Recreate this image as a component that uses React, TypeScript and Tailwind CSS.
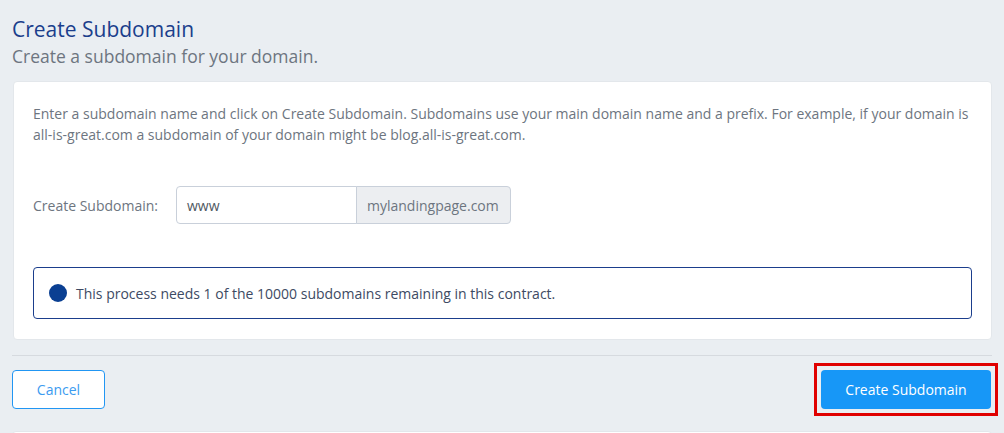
import React from "react";

export default function App() {
  return (
    <div
      className="w-[1004px] h-[433px] overflow-hidden bg-[#eaeef2] pl-[12px] pr-[12px]"
      style={{ fontFamily: '"Open Sans", "Noto Sans", sans-serif' }}
    >
      <div className="pt-[16px]">
        <h1 className="text-[21px] leading-[26px] text-[#1b3e8c] font-normal">Create Subdomain</h1>
        <p className="mt-[2px] text-[17.5px] leading-[24px] text-[#6d7580]">
          Create a subdomain for your domain.
        </p>
      </div>

      <div className="mt-[13px] ml-[1px] bg-white rounded-[4px] border border-[#e3e7eb] px-[19px] pt-[21px] pb-[20px]">
        <p className="text-[14px] leading-[21px] text-[#6d7580]">
          Enter a subdomain name and click on Create Subdomain. Subdomains use your main domain name and a prefix. For example, if your domain is
          all-is-great.com a subdomain of your domain might be blog.all-is-great.com.
        </p>

        <div className="mt-[41px] flex items-center">
          <label className="w-[143px] text-[14px] text-[#6d7580]">Create Subdomain:</label>
          <div className="flex h-[38px]">
            <div className="w-[181px] border border-[#c9d0da] rounded-l-[4px] flex items-center px-[10px] text-[14px] text-[#505862]">
              www
            </div>
            <div className="w-[155px] -ml-px border border-[#c9d0da] rounded-r-[4px] bg-[#eceef1] flex items-center px-[10px] text-[14px] text-[#6d7580]">
              mylandingpage.com
            </div>
          </div>
        </div>

        <div className="mt-[43px] border border-[#1b3e8c] rounded-[4px] h-[52px] flex items-center px-[15px]">
          <span className="w-[18px] h-[18px] rounded-full bg-[#0a3f92] shrink-0" />
          <span className="ml-[9px] text-[14px] text-[#3d4a63]">
            This process needs 1 of the 10000 subdomains remaining in this contract.
          </span>
        </div>
      </div>

      <div className="mt-[15px] border-t border-[#d6dadf]" />

      <div className="mt-[14px] flex items-center justify-between">
        <button className="w-[93px] h-[39px] bg-white border border-[#2196f3] rounded-[4px] text-[14px] text-[#3c9bf0]">
          Cancel
        </button>
        <div className="border-[3px] border-[#e00000] p-[4px] -mr-[6px] -my-[7px]">
          <button className="w-[170px] h-[39px] bg-[#1797f7] rounded-[4px] text-[14px] text-white">
            Create Subdomain
          </button>
        </div>
      </div>

      <div className="mt-[22px] bg-white rounded-[4px] border border-[#e3e7eb] h-[40px]" />
    </div>
  );
}
